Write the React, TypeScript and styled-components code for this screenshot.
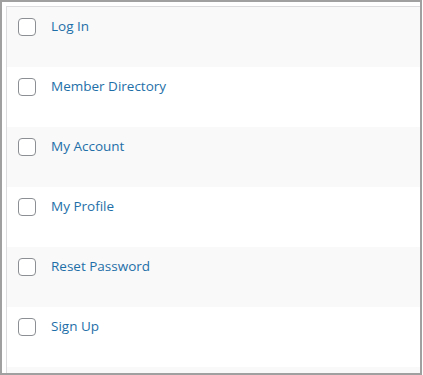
import styled, { createGlobalStyle } from "styled-components";

const pages = ["Log In", "Member Directory", "My Account", "My Profile", "Reset Password", "Sign Up", ""];

const Global = createGlobalStyle`
  html, body {
    margin: 0;
    padding: 0;
    background: #ffffff;
  }
`;

export default function App() {
  return (
    <>
      <Global />
      <Frame>
        <Table>
          {pages.map((title, i) => (
            <Row key={i} $alt={i % 2 === 0}>
              {title && <Check type="checkbox" />}
              {title && <Title href="#">{title}</Title>}
            </Row>
          ))}
        </Table>
      </Frame>
    </>
  );
}

const Frame = styled.div`
  box-sizing: border-box;
  width: 422px;
  height: 375px;
  border: 2px solid #a0a0a0;
  padding: 4px 0 0 4px;
  overflow: hidden;
  background: #ffffff;
`;

const Table = styled.div`
  border-top: 1px solid #dcdcde;
  border-left: 1px solid #dcdcde;
  display: flex;
  flex-direction: column;
`;

const Row = styled.div<{ $alt: boolean }>`
  flex: 0 0 60px;
  height: 60px;
  box-sizing: border-box;
  display: flex;
  align-items: flex-start;
  padding: 11px 0 0 11px;
  background: ${p => (p.$alt ? "#f9f9f9" : "#ffffff")};
`;

const Check = styled.input`
  appearance: none;
  margin: 0;
  width: 18px;
  height: 18px;
  box-sizing: border-box;
  border: 1px solid #8c8f94;
  border-radius: 4px;
  background: #ffffff;
  flex: 0 0 auto;
`;

const Title = styled.a`
  margin-left: 15px;
  margin-top: -2px;
  font-family: "Open Sans", "Noto Sans", sans-serif;
  font-size: 13.5px;
  font-weight: 500;
  line-height: 20px;
  color: #1e6fa8;
  text-decoration: none;
`;
